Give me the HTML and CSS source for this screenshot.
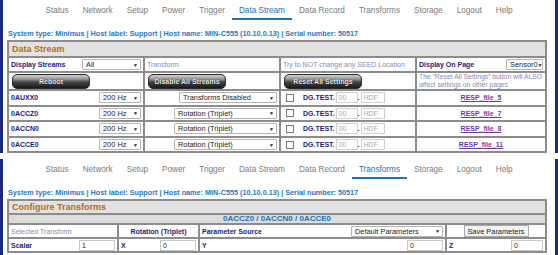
FILE: index.html
```html
<!DOCTYPE html>
<html>
<head>
<meta charset="utf-8">
<link rel="stylesheet" href="styles.css">
</head>
<body>
<div class="panel p1">
  <nav class="nav">
    <span class="tab">Status</span><span class="tab">Network</span><span class="tab">Setup</span><span class="tab">Power</span><span class="tab">Trigger</span><span class="tab active">Data Stream</span><span class="tab">Data Record</span><span class="tab">Transforms</span><span class="tab">Storage</span><span class="tab">Logout</span><span class="tab">Help</span>
  </nav>
  <div class="sysline">System type: Minimus | Host label: Support | Host name: MIN-C555 (10.10.0.13) | Serial number: 50517</div>
  <table class="grid ds">
    <colgroup><col class="c1"><col class="c2"><col class="c3"><col class="c4"></colgroup>
    <tr class="r-head"><th colspan="4" class="head">Data Stream</th></tr>
    <tr class="r-top">
      <td><div class="split"><span class="lbl">Display Streams</span><span class="sel w59">All<i class="arr">▼</i></span></div></td>
      <td class="muted">Transform</td>
      <td class="muted">Try to NOT change any SEED Location</td>
      <td><div class="split"><span class="lbl">Display On Page</span><span class="sel w37">Sensor0<i class="arr">▼</i></span></div></td>
    </tr>
    <tr class="r-btn">
      <td><span class="btn-dark">Reboot</span></td>
      <td><span class="btn-dark">Disable All Streams</span></td>
      <td><span class="btn-dark">Reset All Settings</span></td>
      <td class="muted note">The “Reset All Settings” button will ALSO affect settings on other pages</td>
    </tr>
    <tr class="r-ch">
      <td><div class="split"><span class="lbl">0AUXX0</span><span class="sel w42">200 Hz<i class="arr">▼</i></span></div></td>
      <td class="right"><span class="sel w98">Transforms Disabled<i class="arr">▼</i></span></td>
      <td><div class="seed"><span class="cb"></span><span class="lbl">DG.TEST.</span><span class="inp w22">00</span><span class="dot">.</span><span class="inp w24">HDF</span></div></td>
      <td class="center"><a class="link">RESP_file_5</a></td>
    </tr>
    <tr class="r-ch">
      <td><div class="split"><span class="lbl">0ACCZ0</span><span class="sel w42">200 Hz<i class="arr">▼</i></span></div></td>
      <td class="right"><span class="sel w103">Rotation (Triplet)<i class="arr">▼</i></span></td>
      <td><div class="seed"><span class="cb"></span><span class="lbl">DG.TEST.</span><span class="inp w22">00</span><span class="dot">.</span><span class="inp w24">HDF</span></div></td>
      <td class="center"><a class="link">RESP_file_7</a></td>
    </tr>
    <tr class="r-ch">
      <td><div class="split"><span class="lbl">0ACCN0</span><span class="sel w42">200 Hz<i class="arr">▼</i></span></div></td>
      <td class="right"><span class="sel w103">Rotation (Triplet)<i class="arr">▼</i></span></td>
      <td><div class="seed"><span class="cb"></span><span class="lbl">DG.TEST.</span><span class="inp w22">00</span><span class="dot">.</span><span class="inp w24">HDF</span></div></td>
      <td class="center"><a class="link">RESP_file_8</a></td>
    </tr>
    <tr class="r-ch">
      <td><div class="split"><span class="lbl">0ACCE0</span><span class="sel w42">200 Hz<i class="arr">▼</i></span></div></td>
      <td class="right"><span class="sel w103">Rotation (Triplet)<i class="arr">▼</i></span></td>
      <td><div class="seed"><span class="cb"></span><span class="lbl">DG.TEST.</span><span class="inp w22">00</span><span class="dot">.</span><span class="inp w24">HDF</span></div></td>
      <td class="center"><a class="link">RESP_file_11</a></td>
    </tr>
  </table>
</div>
<div class="panel p2">
  <nav class="nav">
    <span class="tab">Status</span><span class="tab">Network</span><span class="tab">Setup</span><span class="tab">Power</span><span class="tab">Trigger</span><span class="tab">Data Stream</span><span class="tab">Data Record</span><span class="tab active">Transforms</span><span class="tab">Storage</span><span class="tab">Logout</span><span class="tab">Help</span>
  </nav>
  <div class="sysline">System type: Minimus | Host label: Support | Host name: MIN-C555 (10.10.0.13) | Serial number: 50517</div>
  <table class="grid tf">
    <colgroup><col class="t1"><col class="t2"><col class="t3"><col class="t4"></colgroup>
    <tr class="r-head2"><th colspan="4" class="head">Configure Transforms</th></tr>
    <tr class="r-sub"><th colspan="4" class="sub">0ACCZ0 / 0ACCN0 / 0ACCE0</th></tr>
    <tr class="r-tf">
      <td class="muted">Selected Transform</td>
      <td class="center lbl">Rotation (Triplet)</td>
      <td><div class="split"><span class="lbl">Parameter Source</span><span class="sel w92">Default Parameters<i class="arr">▼</i></span></div></td>
      <td class="center"><span class="btn-light">Save Parameters</span></td>
    </tr>
    <tr class="r-tf">
      <td><div class="split"><span class="lbl">Scalar</span><span class="inp dark w36">1</span></div></td>
      <td><div class="split"><span class="lbl">X</span><span class="inp dark w36">0</span></div></td>
      <td><div class="split"><span class="lbl">Y</span><span class="inp dark w36">0</span></div></td>
      <td><div class="split"><span class="lbl">Z</span><span class="inp dark w32">0</span></div></td>
    </tr>
  </table>
</div>
</body>
</html>
```

FILE: styles.css
```css
html, body {
  margin: 0;
  padding: 0;
  background: #fff;
}
body {
  width: 558px;
  height: 255px;
  overflow: hidden;
  font-family: "Liberation Sans", Arial, sans-serif;
}
.panel {
  border-left: 3px solid #1c2a7a;
  border-right: 3px solid #1c2a7a;
  width: 558px;
  box-sizing: border-box;
  padding-left: 4px;
  overflow: hidden;
}
.p1 {
  height: 153px;
}
.p2 {
  margin-top: 6px;
  height: 96px;
}
.nav {
  display: flex;
  justify-content: center;
  padding-top: 6px;
  margin-left: -4px;
}
.tab {
  font-size: 8.2px;
  line-height: 9px;
  color: #7a7a7a;
  padding: 0 7px 3px;
  border-bottom: 2px solid transparent;
}
.tab.active {
  color: #2372b8;
  border-bottom-color: #2372b8;
}
.sysline {
  margin-top: 9px;
  padding-left: 1px;
  font-size: 7.25px;
  line-height: 9px;
  font-weight: bold;
  color: #2a78bd;
  white-space: nowrap;
}
.grid {
  margin-top: 2px;
  border-collapse: collapse;
  table-layout: fixed;
  width: 538px;
  border: 2px solid #8c8c8c;
}
.grid td, .grid th {
  border: 2px solid #8c8c8c;
  padding: 0 2px;
  font-size: 7px;
  vertical-align: middle;
  white-space: nowrap;
  overflow: hidden;
}
.c1, .c2, .c3 { width: 136px; }
.c4 { width: 130px; }
.t1 { width: 110px; }
.t2 { width: 81px; }
.t3 { width: 247px; }
.t4 { width: 100px; }
.head {
  background: #e2e2e2;
  color: #b06d1c;
  font-size: 9px !important;
  font-weight: bold;
  text-align: left;
  padding-left: 3px !important;
}
.r-head { height: 16px; }
.r-head2 { height: 14px; }
.sub {
  background: #dcdcdc;
  color: #2372b8;
  font-size: 8px !important;
  font-weight: bold;
  text-align: center;
  line-height: 8px;
}
.r-sub { height: 10px; }
.r-top { height: 15px; }
.r-btn { height: 16px; }
.r-ch { height: 15.6px; }
.r-tf { height: 14px; }
.split {
  display: flex;
  align-items: center;
  justify-content: space-between;
}
.lbl {
  color: #1d1d7c;
  font-weight: bold;
}
.muted {
  color: #8a8ab4;
  font-weight: normal;
}
.note {
  white-space: normal !important;
  line-height: 8px;
  font-size: 6.8px !important;
}
.right { text-align: right; }
.center { text-align: center; }
.sel {
  display: inline-flex;
  align-items: center;
  justify-content: space-between;
  box-sizing: border-box;
  height: 11px;
  border: 1px solid #b4b4b4;
  border-radius: 1px;
  background: #fff;
  color: #222;
  font-size: 7.4px;
  padding: 0 2px 0 3px;
  text-align: left;
  vertical-align: middle;
}
.arr {
  font-style: normal;
  font-size: 5px;
  color: #222;
}
.w59 { width: 59px; }
.w37 { width: 37px; }
.w42 { width: 42px; }
.w98 { width: 98px; }
.w103 { width: 103px; }
.w92 { width: 92px; }
.w22 { width: 22px; }
.w24 { width: 24px; }
.w36 { width: 36px; }
.w32 { width: 32px; }
.btn-dark {
  display: inline-flex;
  align-items: center;
  justify-content: center;
  box-sizing: border-box;
  width: 78px;
  height: 15px;
  border-radius: 5px;
  border: 1px solid #2a2a2a;
  background: linear-gradient(#cfcfcf 0%, #9a9a9a 30%, #444 55%, #1a1a1a 100%);
  color: #e8e8e8;
  font-weight: bold;
  font-size: 7px;
  text-shadow: 0 0 1px #000;
  margin-left: 1px;
  vertical-align: middle;
}
.btn-light {
  display: inline-flex;
  align-items: center;
  justify-content: center;
  box-sizing: border-box;
  width: 65px;
  height: 12px;
  border: 1px solid #a8a8a8;
  background: #f2f2f2;
  color: #222;
  font-size: 7.4px;
  vertical-align: middle;
}
.seed {
  display: flex;
  align-items: center;
}
.cb {
  width: 6px;
  height: 6px;
  border: 1px solid #777;
  margin: 0 9px 0 3px;
  background: #fff;
}
.seed .lbl { margin-right: 1px; }
.inp {
  display: inline-flex;
  align-items: center;
  box-sizing: border-box;
  height: 11px;
  border: 1px solid #cfcfcf;
  color: #aaa;
  font-size: 7px;
  padding-left: 2px;
  background: #fff;
}
.inp.dark { color: #222; border-color: #c8c8c8; }
.dot {
  color: #1d1d7c;
  font-weight: bold;
  width: 3px;
}
.link {
  color: #6a3fa3;
  text-decoration: underline;
  font-weight: bold;
  font-size: 7px;
}
```
